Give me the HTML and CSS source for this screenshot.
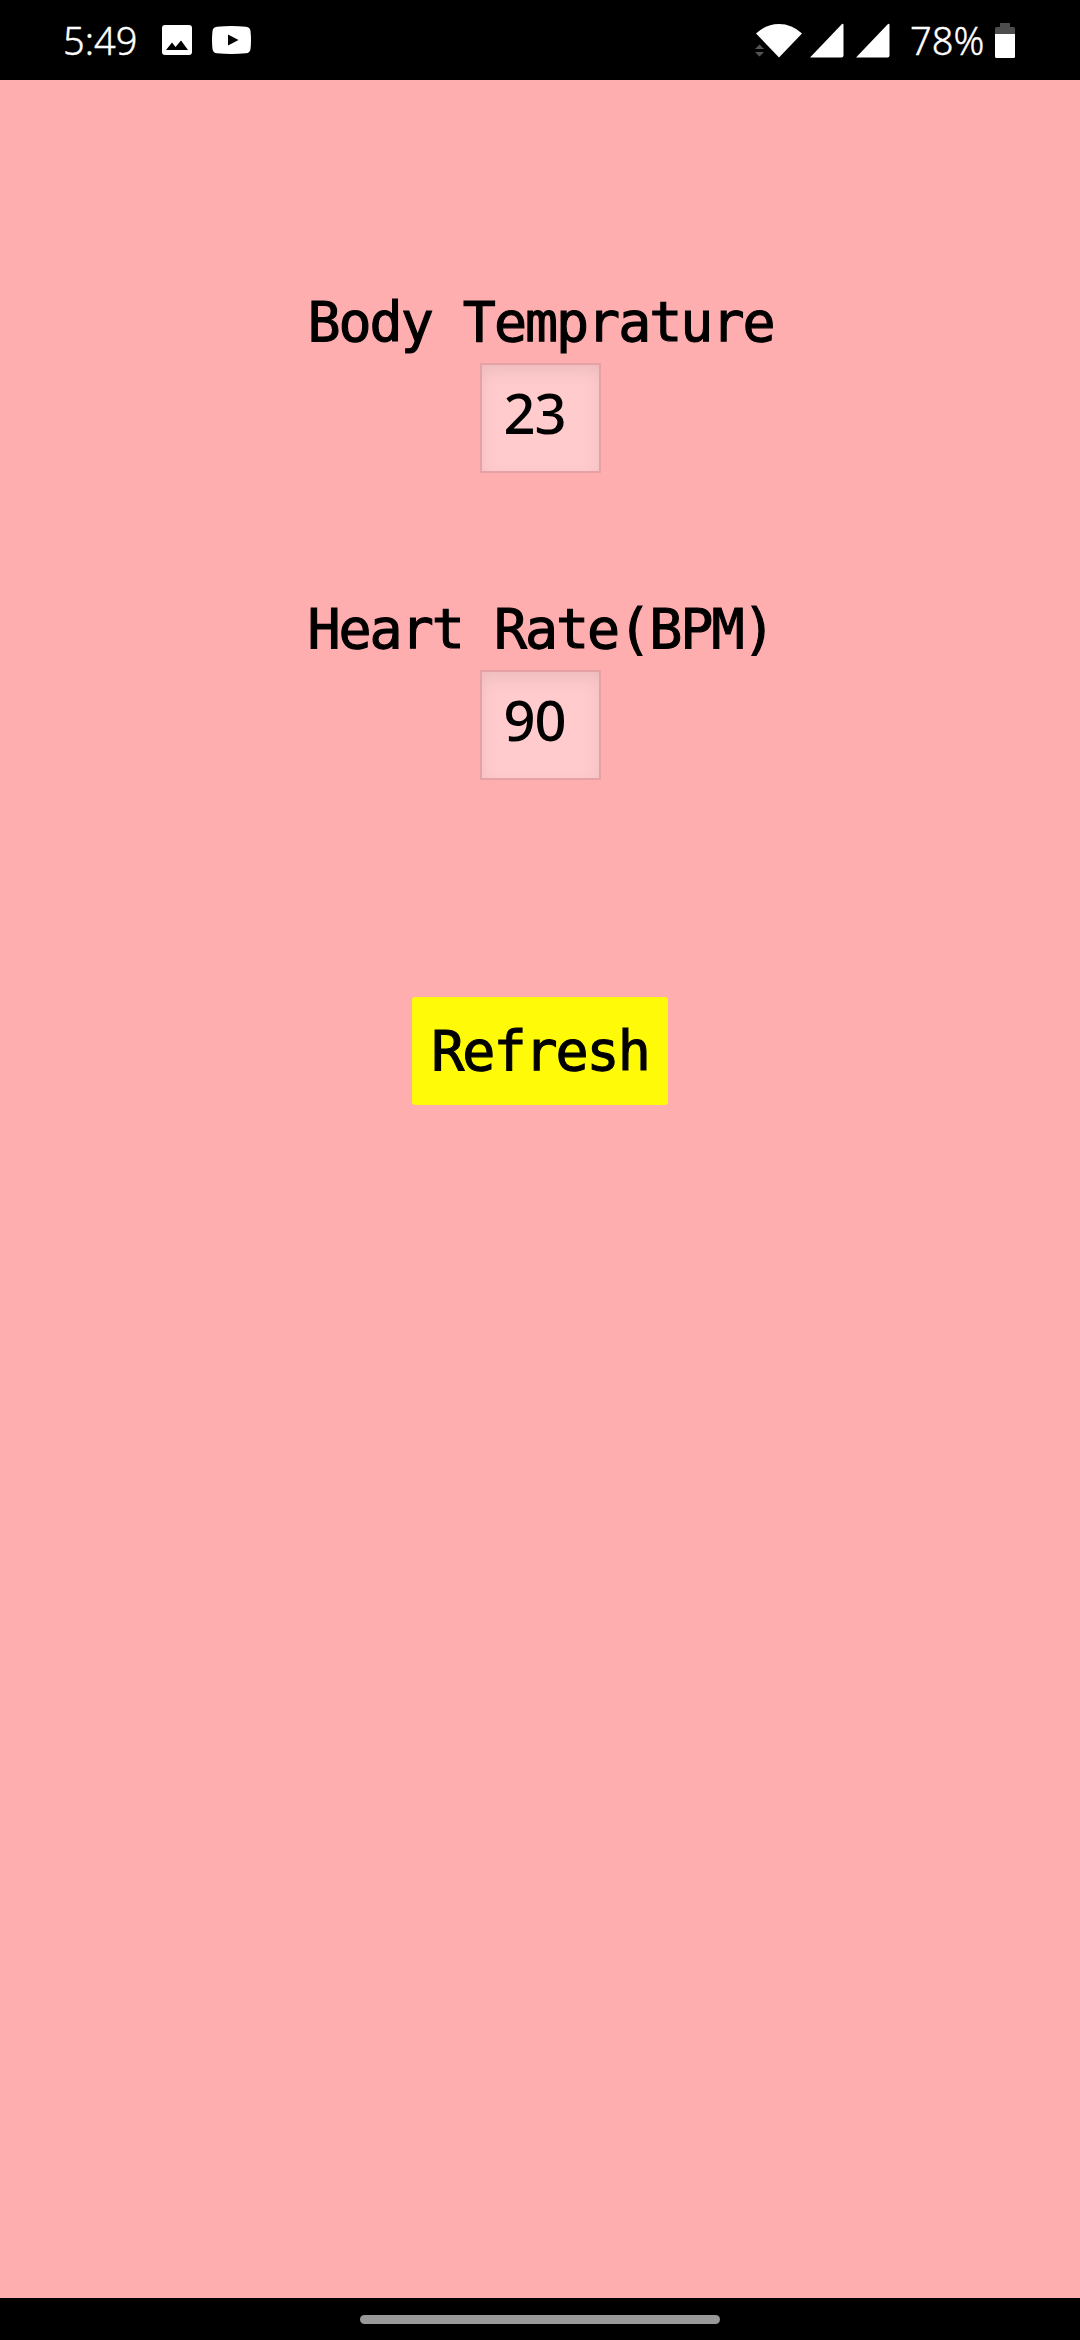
FILE: index.html
```html
<!DOCTYPE html>
<html lang="en">
<head>
<meta charset="utf-8">
<title>Health Monitor</title>
<link rel="stylesheet" href="styles.css">
</head>
<body>
<div class="screen">
  <header class="status">
    <span class="clock">5:49</span>
    <svg class="photo" width="30" height="30" viewBox="0 0 30 30"><path fill="#fff" fill-rule="evenodd" d="M3 0H27Q30 0 30 3V27Q30 30 27 30H3Q0 30 0 27V3Q0 0 3 0ZM4 25H26L19 15.500L13.500 22L10 17.500Z"/></svg>
    <svg class="video" width="39" height="28" viewBox="0 0 39 28"><path fill="#fff" fill-rule="evenodd" d="M5 .7Q19.500-.6 34 .7Q38 1 38.500 5Q39.500 14 38.500 23Q38 27 34 27.300Q19.500 28.600 5 27.300Q1 27 .5 23Q-.5 14 .5 5Q1 1 5 .7ZM16 8.500V19.500L26.500 14Z"/></svg>
    <svg class="wifi" width="48" height="35" viewBox="0 0 48 35"><path fill="#fff" d="M1 10.500Q11 1 24 1T47 10.500L24 34.500Z"/><path fill="#555" d="M0 26L4.500 21.500L9 26ZM0 29H9L4.500 33.500Z"/></svg>
    <svg class="signal" width="35" height="35" viewBox="0 0 35 35"><path fill="#fff" d="M1 34.500L33 1Q34.500 0 34.500 2V32.500Q34.500 34.500 32.500 34.500Z"/></svg>
    <svg class="signal second" width="35" height="35" viewBox="0 0 35 35"><path fill="#fff" d="M1 34.500L33 1Q34.500 0 34.500 2V32.500Q34.500 34.500 32.500 34.500Z"/></svg>
    <span class="percent">78%</span>
    <svg class="battery" width="20" height="35" viewBox="0 0 20 35"><path fill="#4d4d4d" d="M5 0H15V4H18.500Q20 4 20 5.500V11H0V5.500Q0 4 1.500 4H5Z"/><path fill="#fff" d="M0 11H20V33.500Q20 35 18.500 35H1.500Q0 35 0 33.500Z"/></svg>
  </header>
  <main class="content">
    <section class="reading">
      <h1 class="label">Body Temprature</h1>
      <div class="value">23</div>
    </section>
    <section class="reading">
      <h1 class="label">Heart Rate(BPM)</h1>
      <div class="value">90</div>
    </section>
    <button class="refresh">Refresh</button>
  </main>
  <footer class="nav"><div class="handle"></div></footer>
</div>
</body>
</html>
```

FILE: styles.css
```css
* { box-sizing: border-box; }
body { margin: 0; background: #000; }
.screen {
  width: 1080px;
  height: 2340px;
  display: flex;
  flex-direction: column;
}
.status {
  height: 80px;
  padding: 0 65px 0 63px;
  display: flex;
  align-items: center;
  background: #000;
  color: #fff;
  font: 300 38px/80px "Noto Sans", sans-serif;
  -webkit-text-stroke: 0.4px #fff;
}
.clock { width: 99px; }
.video { margin-left: 20px; }
.wifi { margin-left: auto; }
.signal { margin-left: 6px; }
.second { margin-left: 11px; }
.percent { margin-left: 20px; width: 75px; }
.battery { margin-left: 10px; }
.content {
  flex: 1;
  padding-top: 202px;
  display: flex;
  flex-direction: column;
  align-items: center;
  background: #ffaeb0;
  color: #000;
}
.reading {
  height: 307px;
  display: flex;
  flex-direction: column;
  align-items: center;
}
.label, .refresh {
  font: 400 55px/80px "DejaVu Sans Mono", monospace;
  letter-spacing: -2.04px;
  -webkit-text-stroke: 1.1px #000;
}
.label { margin: 0; height: 81px; padding-left: 1px; white-space: pre; }
.value {
  width: 121px;
  height: 110px;
  padding: 0 0 0 22px;
  border: 2px solid #e5a1a3;
  background: #ffcbcc;
  box-shadow: inset 0 7px 18px -3px rgba(90, 70, 70, .13);
  font: 500 56px/95px "Noto Sans", sans-serif;
  letter-spacing: -1px;
}
.refresh {
  width: 256px;
  height: 108px;
  margin-top: 101px;
  padding: 0;
  border: 0;
  border-radius: 3px;
  background: #fffb08;
  color: #000;
}
.nav {
  height: 42px;
  padding-top: 17px;
  display: flex;
  justify-content: center;
  background: #000;
}
.handle {
  width: 360px;
  height: 9px;
  border-radius: 5px;
  background: #999;
}
```
